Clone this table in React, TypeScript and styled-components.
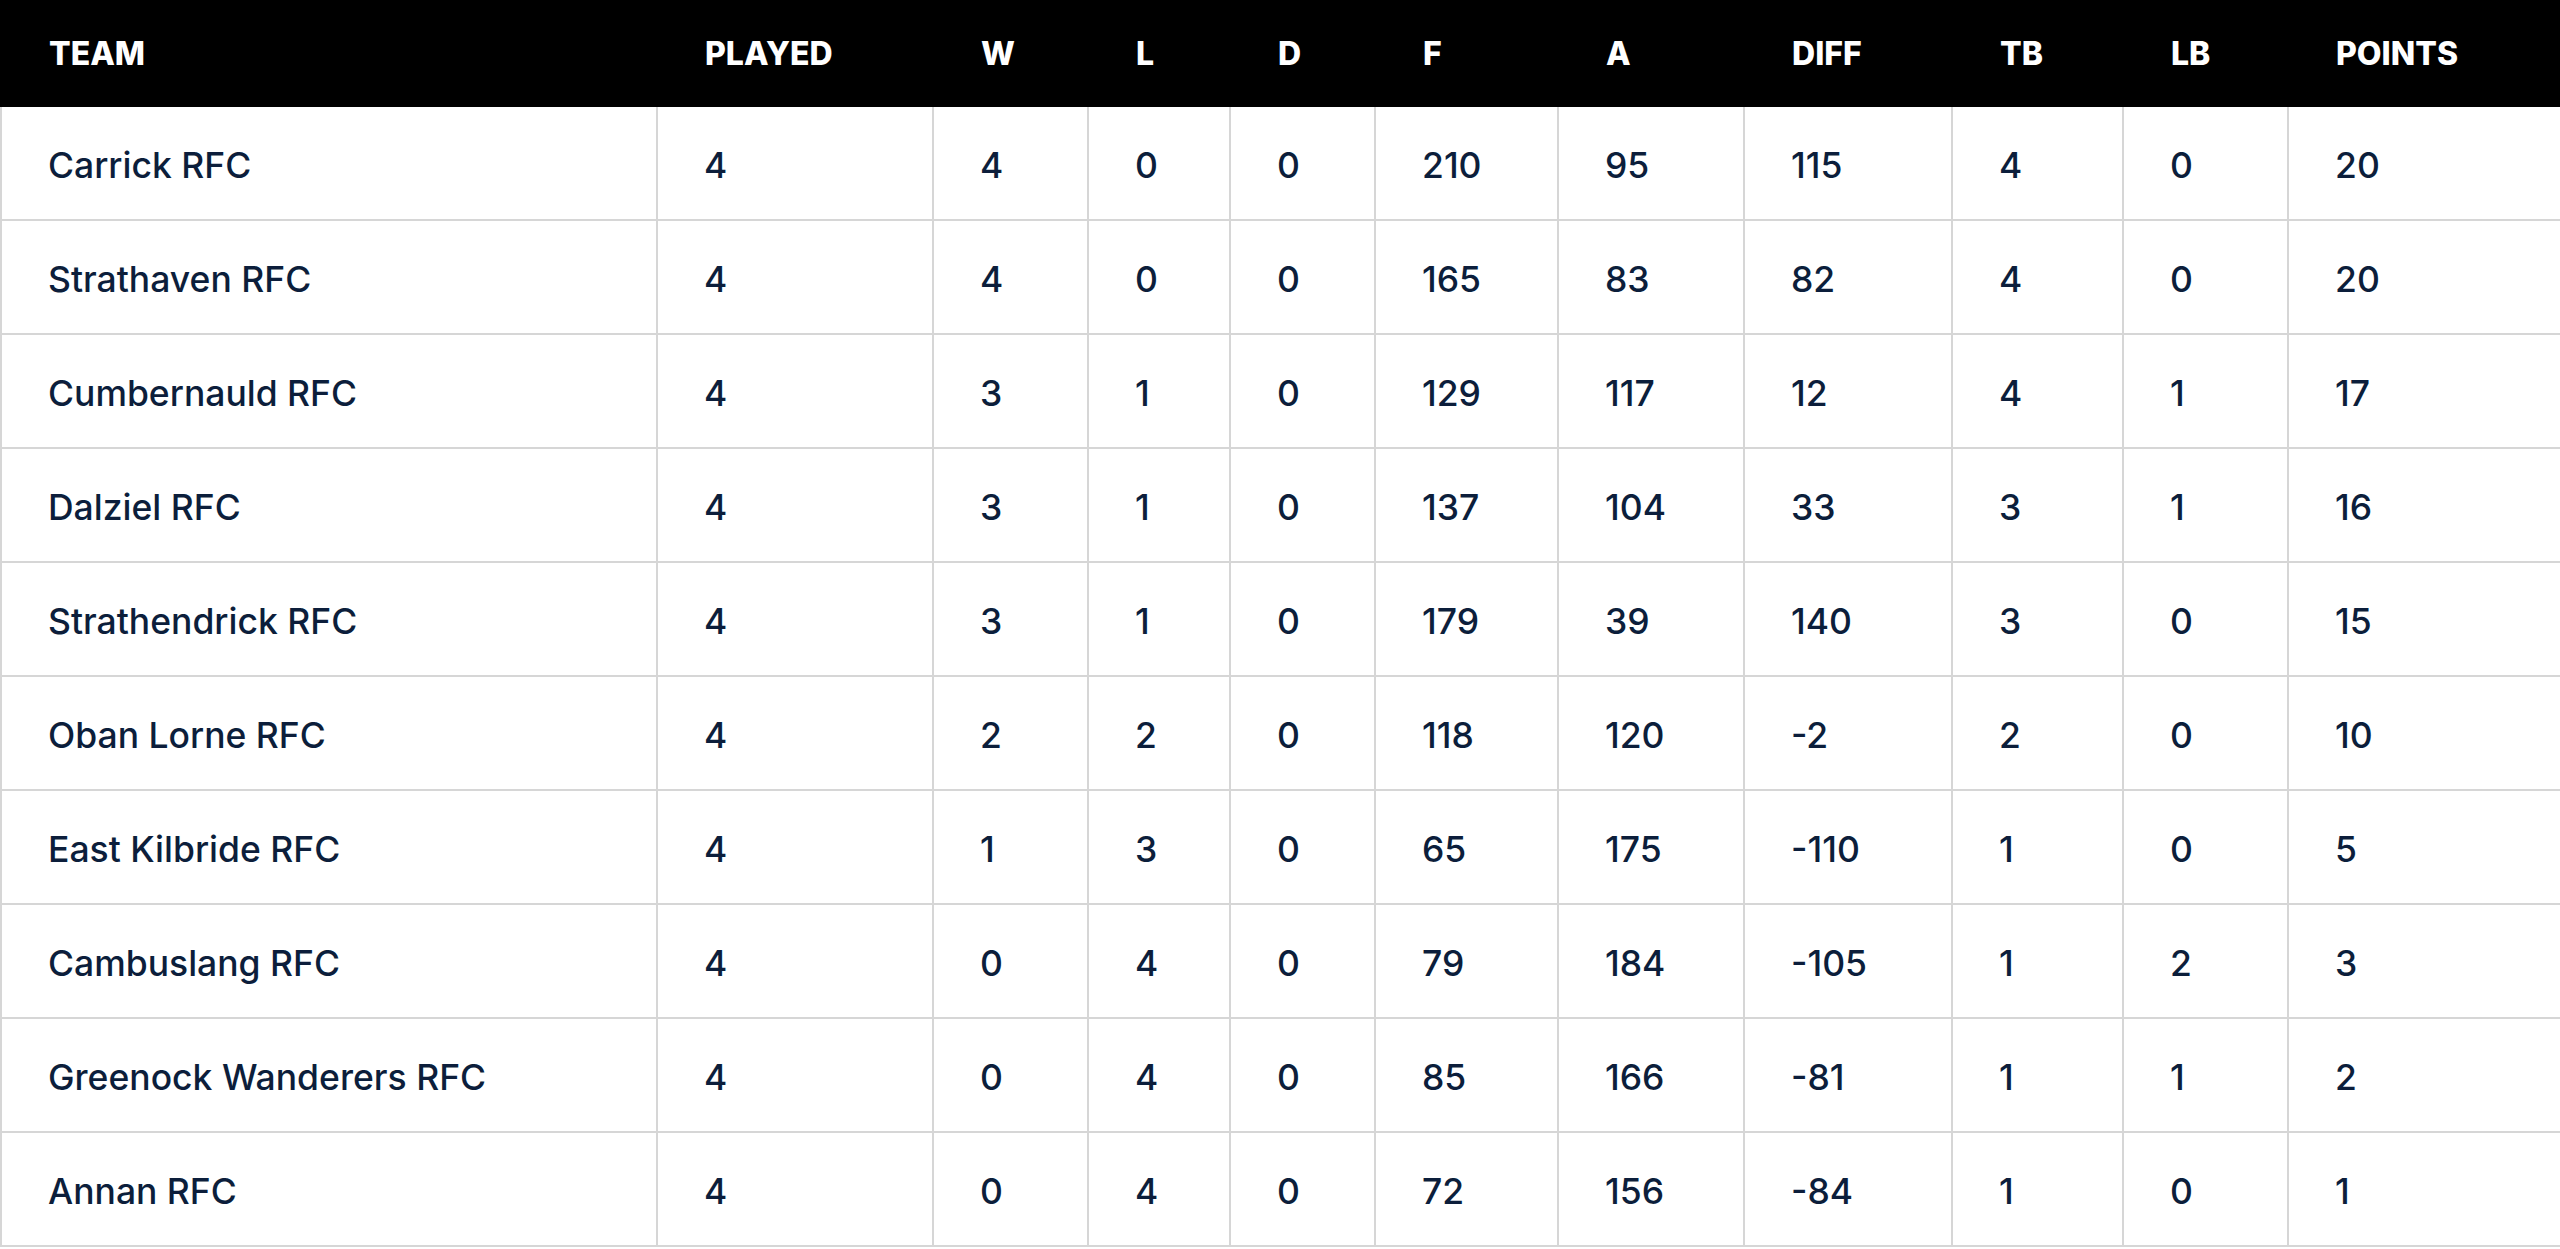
import styled, { createGlobalStyle } from 'styled-components'

// ── Palette ────────────────────────────────────────────────
const C = {
  head: '#000000',
  headText: '#ffffff',
  ink: '#0c1e3b',
  rule: '#d6d6d6',
  bg: '#ffffff',
}

const Global = createGlobalStyle`
  html, body {
    margin: 0;
    padding: 0;
    background: ${C.bg};
  }
`

const Table = styled.table`
  width: 2560px;
  table-layout: fixed;
  border-collapse: collapse;
  font-family: Inter, 'Liberation Sans', sans-serif;
  color: ${C.ink};
`

const HeadRow = styled.tr`
  height: 105px;
  background: ${C.head};
`

const Th = styled.th`
  padding: 0 0 0 47px;
  text-align: left;
  vertical-align: middle;
  font-family: Inter, 'Liberation Sans', sans-serif;
  font-weight: 800;
  font-size: 32px;
  color: ${C.headText};
  border: 2px solid ${C.head};
`

const Row = styled.tr`
  height: 114px;
`

const Td = styled.td`
  padding: 6px 0 0 46px;
  vertical-align: middle;
  font-size: 35.5px;
  font-weight: 500;
  line-height: 1;
  white-space: nowrap;
  border: 2px solid ${C.rule};
`

// ── Data ───────────────────────────────────────────────────

const COLS = [
  { key: 'team', label: 'TEAM', width: 656 },
  { key: 'played', label: 'PLAYED', width: 276 },
  { key: 'w', label: 'W', width: 155 },
  { key: 'l', label: 'L', width: 142 },
  { key: 'd', label: 'D', width: 145 },
  { key: 'f', label: 'F', width: 183 },
  { key: 'a', label: 'A', width: 186 },
  { key: 'diff', label: 'DIFF', width: 208 },
  { key: 'tb', label: 'TB', width: 171 },
  { key: 'lb', label: 'LB', width: 165 },
  { key: 'points', label: 'POINTS', width: 273 },
]

type Standing = [string, number, number, number, number, number, number, number, number, number, number]

const ROWS: Standing[] = [
  ['Carrick RFC', 4, 4, 0, 0, 210, 95, 115, 4, 0, 20],
  ['Strathaven RFC', 4, 4, 0, 0, 165, 83, 82, 4, 0, 20],
  ['Cumbernauld RFC', 4, 3, 1, 0, 129, 117, 12, 4, 1, 17],
  ['Dalziel RFC', 4, 3, 1, 0, 137, 104, 33, 3, 1, 16],
  ['Strathendrick RFC', 4, 3, 1, 0, 179, 39, 140, 3, 0, 15],
  ['Oban Lorne RFC', 4, 2, 2, 0, 118, 120, -2, 2, 0, 10],
  ['East Kilbride RFC', 4, 1, 3, 0, 65, 175, -110, 1, 0, 5],
  ['Cambuslang RFC', 4, 0, 4, 0, 79, 184, -105, 1, 2, 3],
  ['Greenock Wanderers RFC', 4, 0, 4, 0, 85, 166, -81, 1, 1, 2],
  ['Annan RFC', 4, 0, 4, 0, 72, 156, -84, 1, 0, 1],
]

export default function App() {
  return (
    <>
      <Global />
      <Table>
        <colgroup>
          {COLS.map((c) => (
            <col key={c.key} style={{ width: c.width }} />
          ))}
        </colgroup>
        <thead>
          <HeadRow>
            {COLS.map((c) => (
              <Th key={c.key}>{c.label}</Th>
            ))}
          </HeadRow>
        </thead>
        <tbody>
          {ROWS.map((r) => (
            <Row key={r[0]}>
              {r.map((v, i) => (
                <Td key={i}>{v}</Td>
              ))}
            </Row>
          ))}
        </tbody>
      </Table>
    </>
  )
}
